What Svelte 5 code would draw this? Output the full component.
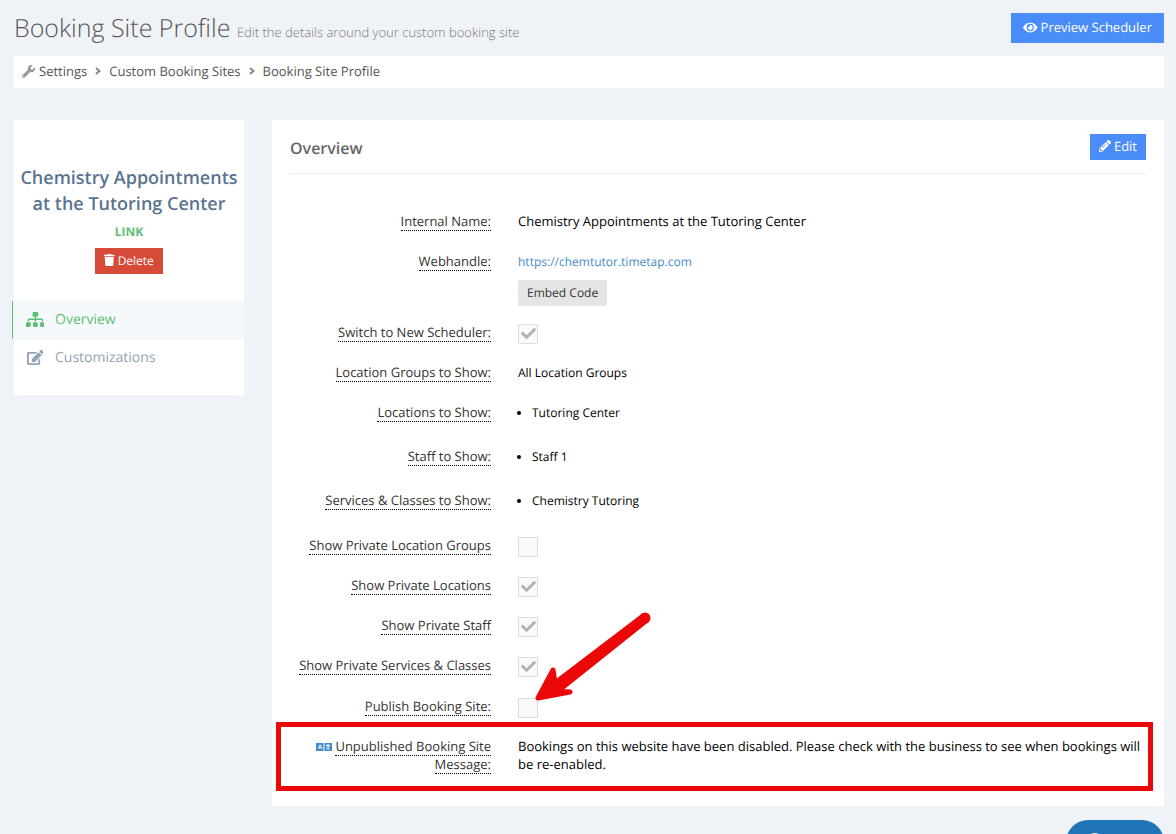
<script lang="ts">
  type Icon = { w: number; d: string };

  // solid icons, all on a 512px tall grid
  const ICONS: Record<string, Icon> = {
    eye: {
      w: 576,
      d: 'M572.52 241.4C518.29 135.59 410.93 64 288 64S57.68 135.64 3.48 241.41a32.35 32.35 0 0 0 0 29.19C57.71 376.41 165.07 448 288 448s230.32-71.64 284.52-177.41a32.35 32.35 0 0 0 0-29.19zM288 400a144 144 0 1 1 144-144 143.93 143.93 0 0 1-144 144zm0-240a95.31 95.31 0 0 0-25.31 3.79 47.85 47.85 0 0 1-66.9 66.9A95.78 95.78 0 1 0 288 160z'
    },
    wrench: {
      w: 512,
      d: 'M507.73 109.1c-2.24-9.03-13.54-12.09-20.12-5.51l-74.36 74.36-67.88-11.31-11.31-67.88 74.36-74.36c6.62-6.62 3.43-17.9-5.66-20.16-47.38-11.74-99.55.91-136.58 37.93-39.64 39.64-50.55 97.1-34.05 147.2L18.74 402.76c-24.99 24.99-24.99 65.51 0 90.5 24.99 24.99 65.51 24.99 90.5 0l213.21-213.21c50.12 16.71 107.47 5.68 147.37-34.22 37.07-37.07 49.7-89.32 37.91-136.73zM64 472c-13.25 0-24-10.75-24-24 0-13.26 10.75-24 24-24s24 10.74 24 24c0 13.25-10.75 24-24 24z'
    },
    trash: {
      w: 448,
      d: 'M432 32H312l-9.4-18.7A24 24 0 0 0 281.1 0H166.8a23.72 23.72 0 0 0-21.4 13.3L136 32H16A16 16 0 0 0 0 48v32a16 16 0 0 0 16 16h416a16 16 0 0 0 16-16V48a16 16 0 0 0-16-16zM53.2 467a48 48 0 0 0 47.9 45h245.8a48 48 0 0 0 47.9-45L416 128H32z'
    },
    pencil: {
      w: 512,
      d: 'M497.9 142.1l-46.1 46.1c-4.7 4.7-12.3 4.7-17 0l-111-111c-4.7-4.7-4.7-12.3 0-17l46.1-46.1c18.7-18.7 49.1-18.7 67.9 0l60.1 60.1c18.8 18.7 18.8 49.1 0 67.9zM284.2 99.8L21.6 362.4.4 483.9c-2.9 16.4 11.4 30.6 27.8 27.8l121.5-21.3 262.6-262.6c4.7-4.7 4.7-12.3 0-17l-111-111c-4.8-4.7-12.4-4.7-17.1 0zM124.1 339.9c-5.5-5.5-5.5-14.3 0-19.8l154-154c5.5-5.5 14.3-5.5 19.8 0s5.5 14.3 0 19.8l-154 154c-5.5 5.5-14.3 5.5-19.8 0zM88 424h48v36.3l-64.5 11.3-31.1-31.1L51.7 376H88v48z'
    },
    check: {
      w: 512,
      d: 'M173.898 439.404l-166.4-166.4c-9.997-9.997-9.997-26.206 0-36.204l36.203-36.204c9.997-9.998 26.207-9.998 36.204 0L192 312.69 432.095 72.596c9.997-9.997 26.207-9.997 36.204 0l36.203 36.204c9.997 9.997 9.997 26.206 0 36.204l-294.4 294.401c-9.998 9.997-26.207 9.997-36.204-.001z'
    },
    sitemap: {
      w: 640,
      d: 'M128 352H32c-17.67 0-32 14.33-32 32v96c0 17.67 14.33 32 32 32h96c17.67 0 32-14.33 32-32v-96c0-17.67-14.33-32-32-32zm-24-80h192v48h48v-48h192v48h48v-57.59c0-21.17-17.23-38.41-38.41-38.41H344v-64h40c17.67 0 32-14.33 32-32V32c0-17.67-14.33-32-32-32H256c-17.67 0-32 14.33-32 32v96c0 17.67 14.33 32 32 32h40v64H94.41C73.23 224 56 241.23 56 262.41V320h48v-48zm264 80h-96c-17.67 0-32 14.33-32 32v96c0 17.67 14.33 32 32 32h96c17.67 0 32-14.33 32-32v-96c0-17.67-14.33-32-32-32zm240 0h-96c-17.67 0-32 14.33-32 32v96c0 17.67 14.33 32 32 32h96c17.67 0 32-14.33 32-32v-96c0-17.67-14.33-32-32-32z'
    },
    edit: {
      w: 576,
      d: 'M402.6 83.2l90.2 90.2c3.8 3.8 3.8 10 0 13.8L274.4 405.6l-92.8 10.3c-12.4 1.4-22.9-9.1-21.5-21.5l10.3-92.8L388.8 83.2c3.8-3.8 10-3.8 13.8 0zm162-22.9l-48.8-48.8c-15.2-15.2-39.9-15.2-55.2 0l-35.4 35.4c-3.8 3.8-3.8 10 0 13.8l90.2 90.2c3.8 3.8 10 3.8 13.8 0l35.4-35.4c15.2-15.3 15.2-40 0-55.2zM384 346.2V448H64V128h229.8c3.2 0 6.2-1.3 8.5-3.5l40-40c7.6-7.6 2.2-20.5-8.5-20.5H48C21.5 64 0 85.5 0 112v352c0 26.5 21.5 48 48 48h352c26.5 0 48-21.5 48-48V306.2c0-10.7-12.9-16-20.5-8.5l-40 40c-2.2 2.3-3.5 5.3-3.5 8.5z'
    }
  };

  const lists = [
    { label: 'Locations to Show:', items: ['Tutoring Center'] },
    { label: 'Staff to Show:', items: ['Staff 1'] },
    { label: 'Services & Classes to Show:', items: ['Chemistry Tutoring'] }
  ];

  const privacy = [
    { id: 'private-groups', label: 'Show Private Location Groups', on: false },
    { id: 'private-locations', label: 'Show Private Locations', on: true },
    { id: 'private-staff', label: 'Show Private Staff', on: true },
    { id: 'private-services', label: 'Show Private Services & Classes', on: true }
  ];
</script>

{#snippet icon(name: string, size: number)}
  <svg class="icon" viewBox="0 0 {ICONS[name].w} 512" height={size} aria-hidden="true">
    <path d={ICONS[name].d} />
  </svg>
{/snippet}

{#snippet chevron()}
  <svg class="chevron" viewBox="0 0 6 8" width="6" height="8" aria-hidden="true">
    <path d="M1 1l3.5 3L1 7" />
  </svg>
{/snippet}

{#snippet tick(id: string, on: boolean)}
  <span class="tick">
    <input type="checkbox" {id} checked={on} disabled />
    {#if on}{@render icon('check', 15)}{/if}
  </span>
{/snippet}

<div class="page">
  <header class="top">
    <h1>Booking Site Profile <small>Edit the details around your custom booking site</small></h1>
    <button class="btn blue large">{@render icon('eye', 13)}Preview Scheduler</button>
  </header>

  <nav class="crumbs" aria-label="Breadcrumb">
    {@render icon('wrench', 13)}
    <a href="#settings">Settings</a>
    {@render chevron()}
    <a href="#sites">Custom Booking Sites</a>
    {@render chevron()}
    <a href="#profile">Booking Site Profile</a>
  </nav>

  <div class="columns">
    <aside class="side">
      <h2>Chemistry Appointments at the Tutoring Center</h2>
      <a class="link" href="#link">LINK</a>
      <button class="btn red">{@render icon('trash', 12)}Delete</button>
      <nav class="menu" aria-label="Profile">
        <a class="active" href="#overview"><span class="glyph">{@render icon('sitemap', 15)}</span>Overview</a>
        <a href="#customizations"><span class="glyph">{@render icon('edit', 15)}</span>Customizations</a>
      </nav>
    </aside>

    <main class="card">
      <div class="card-head">
        <h3>Overview</h3>
        <button class="btn blue">{@render icon('pencil', 12)}Edit</button>
      </div>

      <div class="rows">
        <div class="row">
          <div class="name"><span>Internal Name:</span></div>
          <div class="value large">Chemistry Appointments at the Tutoring Center</div>
        </div>
        <div class="row">
          <div class="name"><span>Webhandle:</span></div>
          <div class="value web">
            <a href="#webhandle">https://chemtutor.timetap.com</a>
            <button class="btn grey">Embed Code</button>
          </div>
        </div>
        <div class="row">
          <div class="name"><label for="new-scheduler">Switch to New Scheduler:</label></div>
          <div class="value box">{@render tick('new-scheduler', true)}</div>
        </div>
        <div class="row">
          <div class="name"><span>Location Groups to Show:</span></div>
          <div class="value">All Location Groups</div>
        </div>
        {#each lists as list}
          <div class="row">
            <div class="name"><span>{list.label}</span></div>
            <ul class="value">
              {#each list.items as item}
                <li>{item}</li>
              {/each}
            </ul>
          </div>
        {/each}
      </div>

      <div class="rows">
        {#each privacy as p}
          <div class="row">
            <div class="name"><label for={p.id}>{p.label}</label></div>
            <div class="value box">{@render tick(p.id, p.on)}</div>
          </div>
        {/each}
      </div>

      <div class="rows">
        <div class="row">
          <div class="name"><label for="publish">Publish Booking Site:</label></div>
          <div class="value box publish">
            {@render tick('publish', false)}
            <svg class="arrow" viewBox="532 610 120 94" width="120" height="94" aria-hidden="true">
              <path d="M538 698 L553 670 L555 683 L643 616 L647 620 L558 691 L570 692 Z" />
              <circle cx="645" cy="618" r="3" />
            </svg>
          </div>
        </div>
        <div class="row marked">
          <div class="name">
            <svg class="lang" viewBox="0 0 16 8" width="16" height="8" aria-hidden="true">
              <rect width="16" height="8" />
              <text x="4" y="6">A</text>
              <path class="split" d="M8 0v8" />
              <path d="M10 2.5h4M12 1v1.5M10.5 6.5c1.5-1 2.5-2 3-4M10.5 3.5c.5 1.500 1.500 2.500 3 3" />
            </svg>
            <span>Unpublished Booking Site Message:</span>
          </div>
          <div class="value large">
            Bookings on this website have been disabled. Please check with the business to see when bookings will be
            re-enabled.
          </div>
        </div>
      </div>
    </main>
  </div>
</div>

<button class="help" aria-label="Help">
  <svg viewBox="0 0 18 18" width="18" height="18" aria-hidden="true">
    <circle cx="9" cy="9" r="8" />
    <path d="M6 7a3 3 0 1 1 4 3q-1 .5-1 2M9 13v1" />
  </svg>
</button>

<style>
  :global(body) {
    margin: 0;
    background: #eff3f8;
    font-family: 'Open Sans', 'Liberation Sans', sans-serif;
    font-size: 13px;
    color: #000;
    text-rendering: geometricPrecision;
  }
  .page {
    padding: 12px 12px 28px 14px;
  }
  h1,
  h2,
  h3,
  ul {
    margin: 0;
    padding: 0;
  }
  a {
    text-decoration: none;
  }
  .icon {
    flex: none;
    fill: currentColor;
  }

  .top {
    display: flex;
    align-items: center;
    justify-content: space-between;
    height: 32px;
    margin-bottom: 12px;
  }
  h1 {
    padding-top: 4px;
    font-size: 25px;
    font-weight: 300;
    line-height: 32px;
    color: #555;
  }
  small {
    font-size: 13px;
    font-weight: 300;
    color: #777;
  }
  .btn {
    display: inline-flex;
    align-items: center;
    gap: 3px;
    box-sizing: border-box;
    height: 26px;
    padding: 0 9px 2px;
    border: 0;
    font-family: inherit;
    font-size: 12px;
    text-rendering: inherit;
    white-space: nowrap;
    color: #fff;
    cursor: pointer;
  }
  .btn.large {
    height: 30px;
    padding: 0 12px 2px;
    font-size: 13px;
  }
  .blue {
    background: #4b8df8;
  }
  .card-head .blue {
    font-size: 13px;
  }
  .red {
    background: #d84a38;
  }
  .grey {
    background: #e5e5e5;
    color: #333;
  }

  .crumbs {
    display: flex;
    align-items: center;
    gap: 8px;
    height: 30px;
    padding: 0 8px 2px;
    margin-bottom: 32px;
    background: #fff;
    color: #999;
  }
  .crumbs a {
    color: #555;
  }
  .crumbs .icon {
    margin-right: -4px;
  }
  .chevron {
    fill: none;
    stroke: #888;
    stroke-width: 2;
  }

  .columns {
    display: flex;
    align-items: flex-start;
    gap: 28px;
  }
  .side {
    display: flex;
    flex: 0 0 230px;
    flex-direction: column;
    align-items: center;
    padding: 45px 0 18px;
    background: #fff;
  }
  .side h2 {
    font-size: 18px;
    font-weight: 600;
    line-height: 26px;
    text-align: center;
    color: #5a7391;
  }
  .link {
    margin: 6px 0 7px;
    font-size: 12px;
    font-weight: 700;
    line-height: 18px;
    color: #5dbf74;
  }
  .menu {
    align-self: stretch;
    margin-top: 27px;
  }
  .menu a {
    display: flex;
    align-items: center;
    height: 37px;
    margin-left: -2px;
    padding-left: 12px;
    border-left: 1px solid transparent;
    border-bottom: 1px solid transparent;
    font-size: 14px;
    color: #93a3b5;
  }
  .menu a.active {
    border-left-color: #5dbf74;
    border-bottom-color: #eef3f7;
    background: #f6f9fb;
    color: #5dbf74;
  }
  .glyph {
    display: flex;
    justify-content: center;
    width: 20px;
    margin-right: 10px;
  }

  .card {
    flex: 1;
    min-width: 0;
    padding: 14px 18px 16px;
    background: #fff;
  }
  .card-head {
    display: flex;
    align-items: center;
    justify-content: space-between;
    padding-bottom: 13px;
    margin-bottom: 38px;
    border-bottom: 1px solid #eee;
  }
  h3 {
    padding-top: 2px;
    font-size: 16px;
    font-weight: 600;
    line-height: 24px;
    color: #666;
  }
  .rows + .rows {
    margin-top: 1px;
  }
  .row {
    display: grid;
    grid-template-columns: 201px 1fr;
    gap: 27px;
    align-items: baseline;
    box-sizing: border-box;
    min-height: 40px;
    padding-bottom: 17px;
    line-height: 18px;
  }
  .name {
    text-align: right;
    color: #333;
  }
  .name span,
  .name label {
    border-bottom: 1px dotted #000;
  }
  .value {
    font-size: 12px;
  }
  .value.large {
    font-size: 13px;
  }
  .value.box {
    align-self: start;
  }
  .web {
    display: flex;
    flex-direction: column;
    align-items: flex-start;
    gap: 9px;
  }
  .web a {
    color: #428bca;
  }
  ul.value {
    margin-bottom: 8px;
    padding-left: 14px;
  }
  .tick {
    display: grid;
    place-items: center;
    width: 20px;
    height: 20px;
    margin-top: 1px;
    color: #b2b2b2;
  }
  .tick input {
    appearance: none;
    grid-area: 1 / 1;
    width: 20px;
    height: 20px;
    margin: 0;
    border: 1px solid #ddd;
    background: #fafafa;
  }
  .tick .icon {
    grid-area: 1 / 1;
    z-index: 1;
    margin-bottom: 2px;
  }

  .publish,
  .marked {
    position: relative;
  }
  .arrow {
    position: absolute;
    left: 14px;
    top: -87px;
    z-index: 2;
    fill: #eb0808;
    stroke: #eb0808;
    stroke-width: 5;
    stroke-linejoin: round;
  }
  .marked::after {
    content: '';
    position: absolute;
    inset: -15px -7px -1px -14px;
    border: 5px solid #eb0808;
    pointer-events: none;
  }
  .lang {
    overflow: visible;
  }
  .lang rect {
    fill: #428bca;
  }
  .lang text {
    font-size: 6px;
    font-weight: 700;
    text-anchor: middle;
    fill: #fff;
  }
  .lang path {
    fill: none;
    stroke: #fff;
  }

  .help {
    position: fixed;
    right: 12px;
    bottom: -30px;
    display: flex;
    align-items: center;
    width: 98px;
    height: 44px;
    padding: 0 20px;
    border: 0;
    border-radius: 22px;
    background: #1f73b7;
  }
  .help svg {
    fill: none;
    stroke: #fff;
    stroke-width: 2;
  }
</style>
